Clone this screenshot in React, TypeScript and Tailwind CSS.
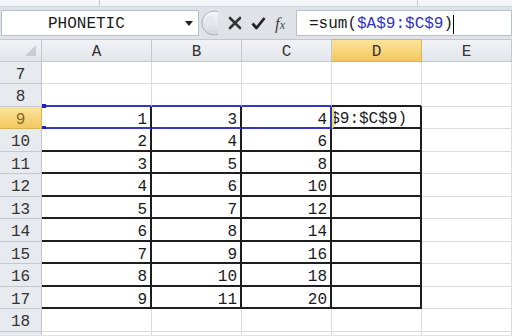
import React from "react"

const colunas = ["A", "B", "C", "D", "E"]
const linhas = [7, 8, 9, 10, 11, 12, 13, 14, 15, 16, 17, 18]

// valor de cada célula (A = r-8, B = r-6, C = A+B)
function valor(r: number, c: number): string {
  if (r < 9 || r > 17) return ""
  const a = r - 8
  const b = r - 6
  if (c === 0) return String(a)
  if (c === 1) return String(b)
  if (c === 2) return String(a + b)
  return ""
}

function bordaCelula(r: number, c: number): string {
  if (r >= 10 && r <= 17 && c <= 3) return "border-r-2 border-b-2 border-[#1e1e1e]"
  if (r === 9 && c <= 1) return "border-r-2 border-r-[#1e1e1e] border-b-2 border-b-[#3535c8]"
  if (r === 9 && c === 2) return "border-r-2 border-r-[#3535c8] border-b-2 border-b-[#3535c8]"
  if (r === 9 && c === 3) return "border-r-2 border-b-2 border-[#1e1e1e] border-l-2 border-l-[#e4e85a]"
  if (r === 8 && c <= 2) return "border-r border-r-[#dadcdd] border-b-2 border-b-[#3535c8]"
  if (r === 8 && c === 3) return "border-r border-r-[#dadcdd] border-b-2 border-b-[#1e1e1e]"
  return "border-r border-b border-[#dadcdd]"
}

export default function App() {
  return (
    <div
      className="w-[512px] h-[336px] overflow-hidden bg-[#dfe3e8] text-[16px] leading-none text-[#1a1a1a]"
      style={{ fontFamily: '"Liberation Mono", "DejaVu Sans Mono", monospace' }}
    >
      {/* faixa do ribbon */}
      <div className="h-[7px] bg-[#f3f5f8] border-b border-[#cfd4da] flex">
        <div className="w-[100px] border-r border-[#c6cbd2]" />
        <div className="w-[318px] border-r border-[#c6cbd2]" />
      </div>

      {/* barra de fórmulas */}
      <div className="h-[32px] pt-[3px] flex items-start">
        <div className="ml-[1px] w-[198px] h-[26px] bg-white border border-[#b9c1cb] flex items-center">
          <span className="pl-[46px] pt-[2px] flex-1">PHONETIC</span>
          <svg width="8" height="5" viewBox="0 0 8 5" className="mr-[5px]">
            <path d="M0 0 L8 0 L4 5 Z" fill="#222" />
          </svg>
        </div>
        <svg width="18" height="26" viewBox="0 0 18 26" className="ml-[1px]">
          <defs>
            <linearGradient id="bola" x1="0" y1="0" x2="0" y2="1">
              <stop offset="0" stopColor="#f6f7f9" />
              <stop offset="1" stopColor="#d3d8de" />
            </linearGradient>
          </defs>
          <circle cx="14" cy="13" r="12" fill="url(#bola)" stroke="#aab2bc" strokeWidth="1" />
          <ellipse cx="10" cy="9" rx="4" ry="3" fill="#e4e7eb" />
        </svg>
        <div className="w-[78px] h-[26px] flex items-center">
          <svg width="14" height="14" viewBox="0 0 14 14" className="ml-[10px]">
            <path d="M2 2 L12 12 M12 2 L2 12" stroke="#333" strokeWidth="2.6" strokeLinecap="round" />
          </svg>
          <svg width="15" height="14" viewBox="0 0 15 14" className="ml-[9px]">
            <path d="M1.5 7.5 L5.5 12 L13.5 2" stroke="#222" strokeWidth="2.8" fill="none" strokeLinejoin="round" />
          </svg>
          <span
            className="ml-[9px] italic text-[17px] text-[#444]"
            style={{ fontFamily: '"Liberation Serif", serif' }}
          >
            f<span className="text-[12px]">x</span>
          </span>
        </div>
        <div className="flex-1 h-[26px] bg-white border border-[#b9c1cb] flex items-center pl-[12px] pt-[2px]">
          <span>=sum(</span>
          <span className="text-[#2f2fc4]">$A$9:$C$9</span>
          <span>)</span>
          <span className="w-px h-[19px] bg-black" />
        </div>
      </div>

      {/* cabeçalho das colunas */}
      <div className="grid grid-cols-[42px_110px_90px_90px_90px_90px] grid-rows-[23px] h-[23px]">
        <div className="bg-gradient-to-b from-[#f1f3f6] to-[#e2e6ea] border-t border-r border-b border-[#c3c8cf] flex items-end justify-end pr-[5px] pb-[5px]">
          <svg width="11" height="11" viewBox="0 0 11 11">
            <path d="M11 0 L11 11 L0 11 Z" fill="#c9ced5" />
          </svg>
        </div>
        {colunas.map((c) => (
          <div
            key={c}
            className={
              c === "D"
                ? "bg-gradient-to-b from-[#fbe49a] to-[#f3c85e] border-t border-r border-b border-[#d7b35a] flex items-center justify-center pt-[2px] text-[#333]"
                : "bg-gradient-to-b from-[#f1f3f6] to-[#e2e6ea] border-t border-r border-b border-[#c3c8cf] flex items-center justify-center pt-[2px] text-[#333]"
            }
          >
            {c}
          </div>
        ))}
      </div>

      {/* linhas */}
      {linhas.map((r) => (
        <div
          key={r}
          className={
            r % 2 === 0
              ? "grid grid-cols-[42px_110px_90px_90px_90px_90px] grid-rows-[23px] h-[23px]"
              : "grid grid-cols-[42px_110px_90px_90px_90px_90px] grid-rows-[22px] h-[22px]"
          }
        >
          <div
            className={
              r === 9
                ? "bg-gradient-to-b from-[#fbe49a] to-[#f3c85e] border-r border-b border-[#d7b35a] flex items-center justify-center pt-[4px] text-[#8a6a22]"
                : "bg-[#e7eaee] border-r border-b border-[#c3c8cf] flex items-center justify-center pt-[4px] text-[#333]"
            }
          >
            {r}
          </div>
          {colunas.map((_, c) => (
            <div
              key={c}
              className={`relative bg-white flex items-center ${bordaCelula(r, c)} ${
                r === 9 && c === 3 ? "justify-end overflow-hidden pr-[13px]" : "justify-end pr-[3px]"
              }`}
            >
              {r === 9 && c === 3 ? (
                <span className="whitespace-nowrap pt-[4px]">=sum($A$9:$C$9)</span>
              ) : (
                <span className="pt-[5px]">{valor(r, c)}</span>
              )}
              {r === 9 && c === 0 && (
                <>
                  <span className="absolute left-0 -top-[3px] w-[4px] h-[4px] bg-[#2020c0]" />
                  <span className="absolute left-0 -bottom-[3px] w-[4px] h-[4px] bg-[#2020c0]" />
                </>
              )}
            </div>
          ))}
        </div>
      ))}

      {/* linha 19, cortada */}
      <div className="grid grid-cols-[42px_110px_90px_90px_90px_90px] h-[3px]">
        <div className="bg-[#e7eaee] border-r border-[#c3c8cf]" />
        {colunas.map((c) => (
          <div key={c} className="bg-white border-r border-[#dadcdd]" />
        ))}
      </div>
    </div>
  )
}
